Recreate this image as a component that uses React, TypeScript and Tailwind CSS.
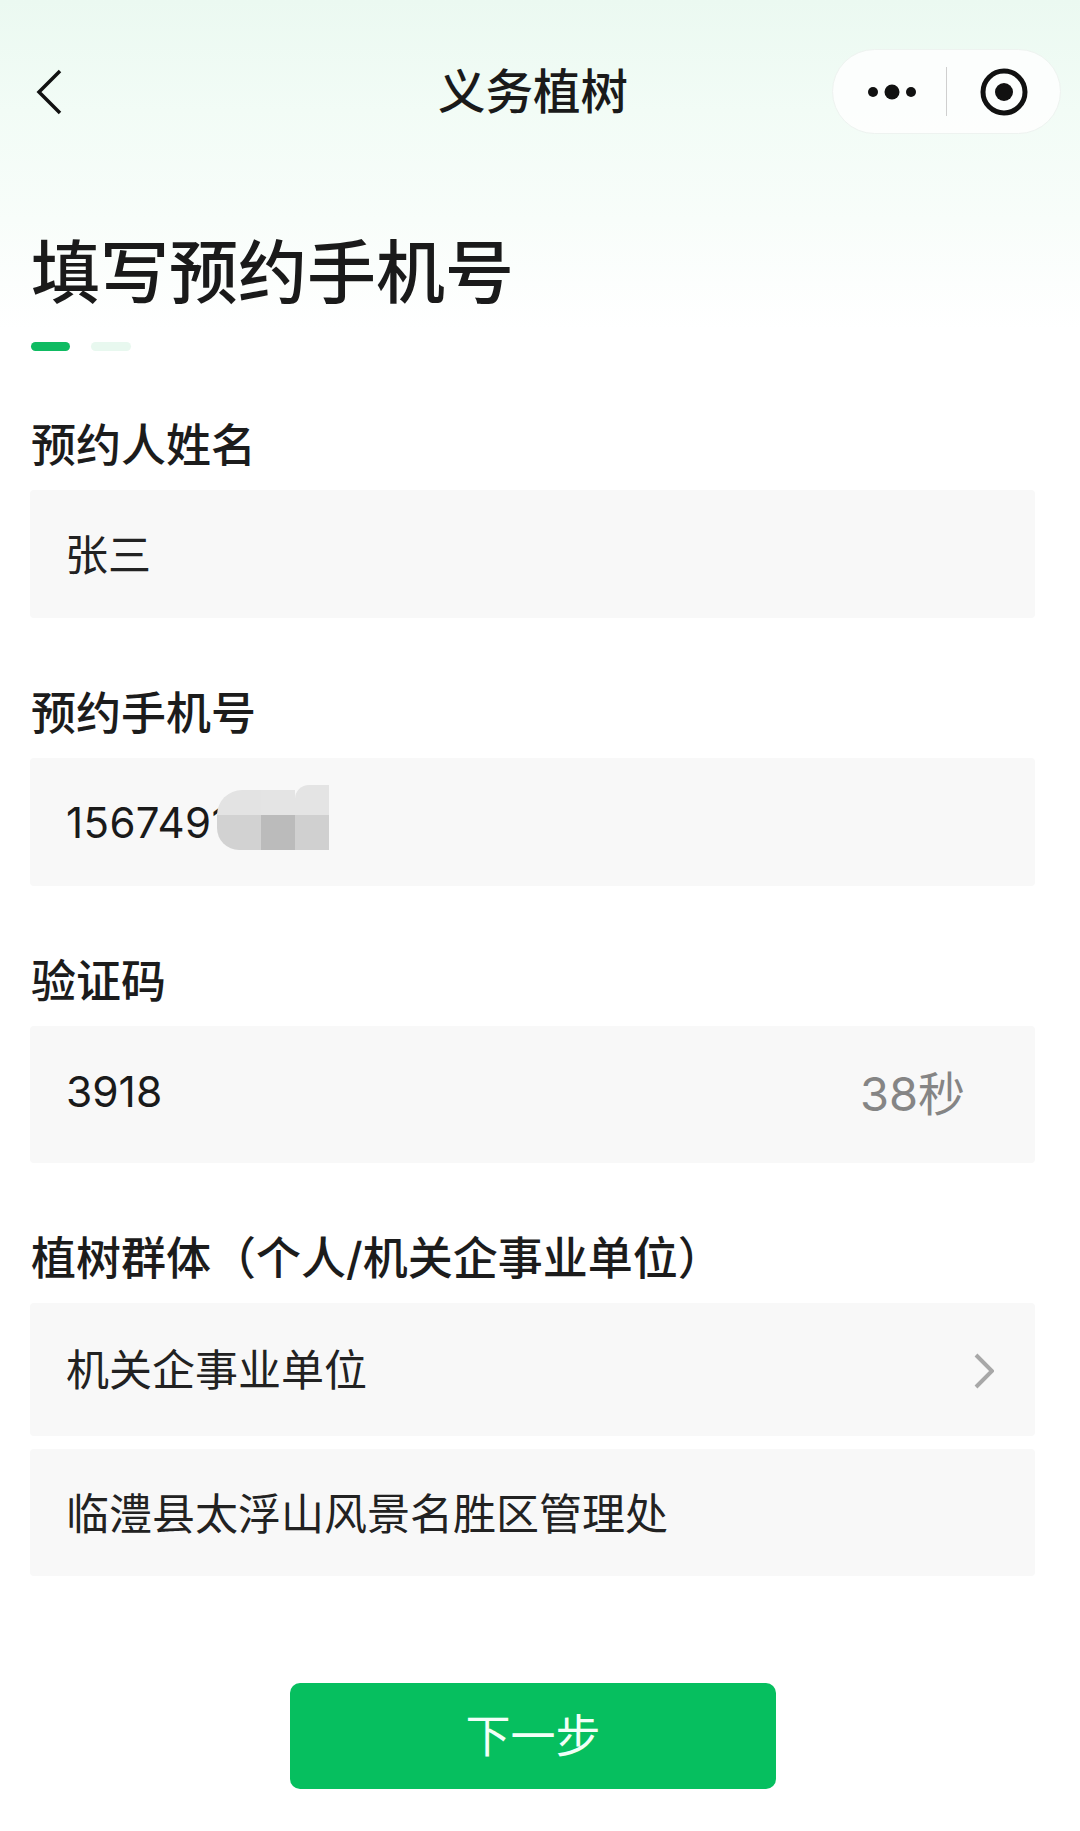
const font = "font-['Inter','Noto_Sans_CJK_SC',sans-serif]"

function Label({ text }: { text: string }) {
  return <div className="mt-[65px] mb-[15px] h-[60px] pl-[1px] text-[45px] leading-[62px] font-medium text-[#1c1c1c] whitespace-nowrap">{text}</div>
}

function MoreDots() {
  return (
    <svg width="50" height="20" viewBox="0 0 50 20">
      <circle cx="6" cy="10" r="5" fill="#111" />
      <circle cx="25" cy="10" r="7.5" fill="#111" />
      <circle cx="44" cy="10" r="5" fill="#111" />
    </svg>
  )
}

function Target() {
  return (
    <svg width="48" height="48" viewBox="0 0 48 48">
      <circle cx="24" cy="24" r="21" fill="none" stroke="#111" strokeWidth="5" />
      <circle cx="24" cy="24" r="9" fill="#111" />
    </svg>
  )
}

export default function App() {
  return (
    <div className={`${font} w-[1080px] h-[1831px] overflow-hidden bg-[linear-gradient(180deg,#ebf9f1_0px,#f2fcf6_110px,#f8fdfa_220px,#ffffff_330px)]`}>
      {/* nav bar */}
      <div className="flex items-center h-[85px] mt-[49px] pl-[36px] pr-[19px]">
        <svg width="26" height="46" viewBox="0 0 26 46" className="shrink-0">
          <path d="M24 2 L3 23 L24 44" fill="none" stroke="#111" strokeWidth="3.5" />
        </svg>
        <div className="ml-[376px] text-[47.5px] leading-[60px] font-medium text-[#1a1a1a] whitespace-nowrap">义务植树</div>
        <div className="ml-auto flex items-center w-[229px] h-[85px] rounded-[43px] bg-white/80 border border-[#eef3f0]">
          <div className="ml-[34px]"><MoreDots /></div>
          <div className="ml-[29px] w-px h-[49px] bg-[#cfcfcf]" />
          <div className="ml-[33px]"><Target /></div>
        </div>
      </div>

      {/* heading */}
      <div className="pl-[31px] mt-[99px] text-[69px] leading-[80px] font-medium text-[#1a1a1a] whitespace-nowrap">填写预约手机号</div>
      <div className="flex gap-[21px] pl-[31px] mt-[29px]">
        <div className="w-[39px] h-[9px] rounded-full bg-[#0fbb62]" />
        <div className="w-[40px] h-[9px] rounded-full bg-[#e8f8ef]" />
      </div>

      {/* form */}
      <div className="w-[1005px] ml-[30px] mt-[-1px]">
        <Label text="预约人姓名" />
        <div className="flex items-center h-[128px] pl-[35px] pt-[2px] bg-[#f8f8f8] rounded-[4px] text-[43px] text-[#222]">张三</div>

        <Label text="预约手机号" />
        <div className="relative flex items-center h-[128px] pl-[36px] pt-[1px] bg-[#f8f8f8] rounded-[4px] text-[42px] tracking-[0.4px] text-[#1a1a1a]">
          1567491
          <div className="absolute left-[187px] top-[27px] w-[112px] h-[65px] grid grid-cols-[44px_34px_34px] grid-rows-[30px_35px]">
            <div className="bg-[#e3e3e3] mt-[5px] rounded-tl-[30px]" />
            <div className="bg-[#e4e4e4] mt-[5px]" />
            <div className="bg-[#e4e4e4] rounded-tl-[14px]" />
            <div className="bg-[#d2d2d2] rounded-bl-[22px]" />
            <div className="bg-[#bbbbbb]" />
            <div className="bg-[#d0d0d0]" />
          </div>
        </div>

        <Label text="验证码" />
        <div className="flex items-center justify-between h-[137px] pl-[36px] pr-[70px] bg-[#f8f8f8] rounded-[4px] text-[42.5px] text-[#1a1a1a]">
          <span className="mb-[6px]">3918</span>
          <span className="text-[47px] text-[#858585]">38秒</span>
        </div>

        <Label text="植树群体（个人/机关企事业单位）" />
        <div className="flex items-center justify-between h-[133px] pl-[36px] pr-[41px] pt-[2px] bg-[#f8f8f8] rounded-[4px] text-[43px] text-[#222]">
          <span>机关企事业单位</span>
          <svg width="20" height="36" viewBox="0 0 20 36">
            <path d="M2 2 L18 18 L2 34" fill="none" stroke="#a8a8a8" strokeWidth="4" />
          </svg>
        </div>
        <div className="flex items-center h-[127px] mt-[13px] pl-[36px] pt-[4px] bg-[#f8f8f8] rounded-[4px] text-[43px] text-[#222] whitespace-nowrap">临澧县太浮山风景名胜区管理处</div>
      </div>

      {/* next */}
      <div className="flex items-center justify-center w-[486px] h-[106px] ml-[290px] mt-[107px] pt-[2px] rounded-[10px] bg-[#06bf5f] text-[45px] text-[#f2fff8]">下一步</div>
    </div>
  )
}
